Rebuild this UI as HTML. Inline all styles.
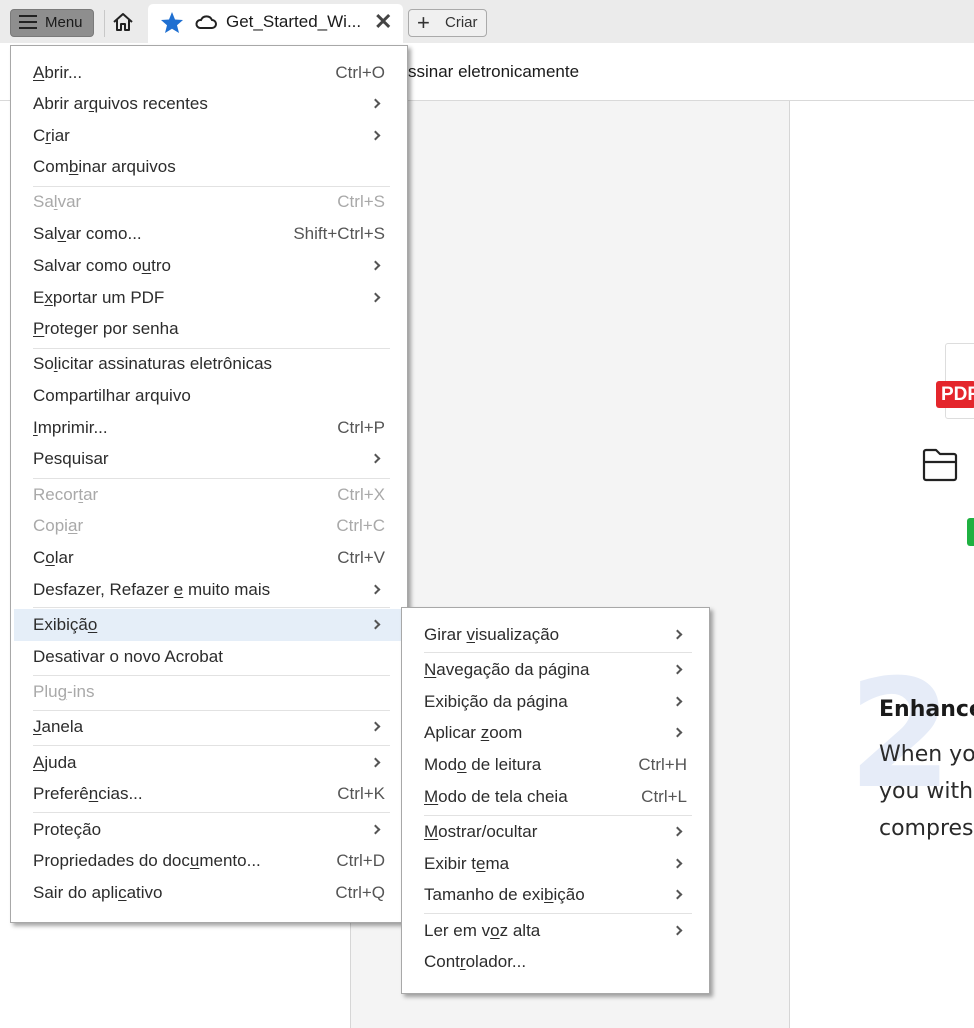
<!DOCTYPE html>
<html><head><meta charset="utf-8">
<style>
*{margin:0;padding:0;box-sizing:border-box}
body{width:974px;height:1028px;overflow:hidden;position:relative;background:#fff;font-family:"Liberation Sans",Arial,sans-serif;font-size:17px;color:#2c2c2c}
.abs{position:absolute}
.menu{position:absolute;background:#fff;border:1px solid #a8a8a8;box-shadow:3px 3px 4px rgba(0,0,0,.35)}
.r{position:absolute;left:0;right:0;height:22px;line-height:22px}
.r .t{position:absolute;left:22px}
.r .k{position:absolute;right:22px;color:#555}
.r .a{position:absolute;right:28px;width:7px;height:7px;border-right:2px solid #555;border-top:2px solid #555;transform:rotate(45deg);top:7px}
.d{color:#a9a9a9}.d .k{color:#a9a9a9}
.sep{position:absolute;left:22px;right:17px;height:1px;background:#e2e2e2}
u{text-decoration:underline;text-underline-offset:2px}
</style></head><body>
<div class="abs" style="left:0;top:0;width:974px;height:43px;background:#ebebeb"></div>
<div class="abs" style="left:10px;top:9px;width:84px;height:28px;background:#8e8e8e;border-radius:4px;border:1px solid #7a7a7a"></div>
<div class="abs" style="left:19px;top:15px;width:18px;height:2px;background:#222;box-shadow:0 6px 0 #222,0 12px 0 #222"></div>
<div class="abs" style="left:45px;top:14px;font-size:15px;color:#1a1a1a">Menu</div>
<div class="abs" style="left:104px;top:10px;width:1px;height:27px;background:#c8c8c8"></div>
<svg class="abs" style="left:112px;top:12px" width="22" height="20" viewBox="0 0 22 20"><path d="M2 10 L11 2 L20 10 M5 8 V18 H9 V12 H13 V18 H17 V8" fill="none" stroke="#222" stroke-width="2" stroke-linejoin="round"/></svg>
<div class="abs" style="left:148px;top:4px;width:255px;height:39px;background:#fff;border-radius:5px 5px 0 0"></div>
<svg class="abs" style="left:160px;top:11px" width="24" height="23" viewBox="0 0 24 23"><path d="M12 1 L15 8.5 L23 9 L17 14.2 L19 22 L12 17.8 L5 22 L7 14.2 L1 9 L9 8.5 Z" fill="#1f6fd1"/></svg>
<svg class="abs" style="left:195px;top:14px" width="22" height="16" viewBox="0 0 22 16"><path d="M5 14 H17 A4 4 0 0 0 17 6 A6 6 0 0 0 6 6 A4 4 0 0 0 5 14 Z" fill="none" stroke="#222" stroke-width="2"/></svg>
<div class="abs" style="left:226px;top:12px;font-size:17px;color:#1a1a1a">Get_Started_Wi...</div>
<div class="abs" style="left:374px;top:9px;font-size:22px;color:#444;font-weight:bold">✕</div>
<div class="abs" style="left:408px;top:9px;width:79px;height:28px;border:1px solid #aaa;border-radius:4px;background:#f0f0f0"></div>
<div class="abs" style="left:417px;top:10px;font-size:22px;color:#333">+</div>
<div class="abs" style="left:445px;top:14px;font-size:15px;color:#333">Criar</div>
<div class="abs" style="left:408px;top:62px;font-size:17px;color:#1a1a1a">ssinar eletronicamente</div>
<div class="abs" style="left:0;top:100px;width:974px;height:1px;background:#d9d9d9"></div>
<div class="abs" style="left:350px;top:101px;width:440px;height:927px;background:#f4f4f4;border-left:1px solid #d6d6d6;border-right:1px solid #d6d6d6"></div>
<div class="abs" style="left:945px;top:343px;width:40px;height:76px;border:1px solid #ddd;border-radius:3px;background:#fff"></div>
<div class="abs" style="left:936px;top:381px;width:40px;height:27px;background:#e4262c;border-radius:3px;color:#fff;font-weight:bold;font-size:19px;line-height:27px;padding-left:5px">PDF</div>
<svg class="abs" style="left:921px;top:448px" width="38" height="34" viewBox="0 0 38 34"><path d="M3 4 A2 2 0 0 1 5 2 H15 L19 6 H33 A2 2 0 0 1 35 8 V30 A2 2 0 0 1 33 32 H5 A2 2 0 0 1 3 30 Z M3 14 H35" fill="none" stroke="#222" stroke-width="2.2" stroke-linejoin="round"/></svg>
<div class="abs" style="left:967px;top:518px;width:10px;height:28px;background:#1fb141;border-radius:3px"></div>
<div class="abs" style="left:848px;top:660px;font-size:150px;font-weight:bold;color:#e6ecf8;line-height:1;font-family:'DejaVu Sans',sans-serif">2</div>
<div class="abs" style="left:879px;top:697px;font-size:22px;font-weight:bold;color:#1a1a1a;font-family:'DejaVu Sans',sans-serif;white-space:nowrap">Enhance</div>
<div class="abs" style="left:879px;top:736px;font-size:22px;color:#2a2a2a;line-height:37px;font-family:'DejaVu Sans',sans-serif;white-space:nowrap">When you<br>you with<br>compres</div>

<div class="menu" style="left:10px;top:45px;width:398px;height:878px">
<div class="r" style="top:16px"><span class="t"><u>A</u>brir...</span><span class="k">Ctrl+O</span></div>
<div class="r" style="top:47px"><span class="t">Abrir ar<u>q</u>uivos recentes</span><span class="a"></span></div>
<div class="r" style="top:79px"><span class="t">C<u>r</u>iar</span><span class="a"></span></div>
<div class="r" style="top:110px"><span class="t">Com<u>b</u>inar arquivos</span></div>
<div class="sep" style="top:140px"></div>
<div class="r d" style="top:145px"><span class="t">Sa<u>l</u>var</span><span class="k">Ctrl+S</span></div>
<div class="r" style="top:177px"><span class="t">Sal<u>v</u>ar como...</span><span class="k">Shift+Ctrl+S</span></div>
<div class="r" style="top:209px"><span class="t">Salvar como o<u>u</u>tro</span><span class="a"></span></div>
<div class="r" style="top:241px"><span class="t">E<u>x</u>portar um PDF</span><span class="a"></span></div>
<div class="r" style="top:272px"><span class="t"><u>P</u>roteger por senha</span></div>
<div class="sep" style="top:302px"></div>
<div class="r" style="top:307px"><span class="t">So<u>l</u>icitar assinaturas eletrônicas</span></div>
<div class="r" style="top:339px"><span class="t">Compartilhar arquivo</span></div>
<div class="r" style="top:371px"><span class="t"><u>I</u>mprimir...</span><span class="k">Ctrl+P</span></div>
<div class="r" style="top:402px"><span class="t">Pesquisar</span><span class="a"></span></div>
<div class="sep" style="top:432px"></div>
<div class="r d" style="top:438px"><span class="t">Recor<u>t</u>ar</span><span class="k">Ctrl+X</span></div>
<div class="r d" style="top:469px"><span class="t">Copi<u>a</u>r</span><span class="k">Ctrl+C</span></div>
<div class="r" style="top:501px"><span class="t">C<u>o</u>lar</span><span class="k">Ctrl+V</span></div>
<div class="r" style="top:533px"><span class="t">Desfazer, Refazer <u>e</u> muito mais</span><span class="a"></span></div>
<div class="sep" style="top:561px"></div>
<div class="abs" style="left:3px;right:0;top:563px;height:32px;background:#e5eef8"></div>
<div class="r" style="top:568px"><span class="t">Exibiçã<u>o</u></span><span class="a"></span></div>
<div class="r" style="top:600px"><span class="t">Desativar o novo Acrobat</span></div>
<div class="sep" style="top:629px"></div>
<div class="r d" style="top:635px"><span class="t">Plu<u>g</u>-ins</span></div>
<div class="sep" style="top:664px"></div>
<div class="r" style="top:670px"><span class="t"><u>J</u>anela</span><span class="a"></span></div>
<div class="sep" style="top:699px"></div>
<div class="r" style="top:706px"><span class="t"><u>A</u>juda</span><span class="a"></span></div>
<div class="r" style="top:737px"><span class="t">Preferê<u>n</u>cias...</span><span class="k">Ctrl+K</span></div>
<div class="sep" style="top:766px"></div>
<div class="r" style="top:773px"><span class="t">Proteção</span><span class="a"></span></div>
<div class="r" style="top:804px"><span class="t">Propriedades do doc<u>u</u>mento...</span><span class="k">Ctrl+D</span></div>
<div class="r" style="top:836px"><span class="t">Sair do apli<u>c</u>ativo</span><span class="k">Ctrl+Q</span></div>
</div>

<div class="menu" style="left:401px;top:607px;width:309px;height:387px">
<div class="r" style="top:16px"><span class="t">Girar <u>v</u>isualização</span><span class="a"></span></div>
<div class="sep" style="top:44px"></div>
<div class="r" style="top:51px"><span class="t"><u>N</u>avegação da página</span><span class="a"></span></div>
<div class="r" style="top:83px"><span class="t">Exibição da página</span><span class="a"></span></div>
<div class="r" style="top:114px"><span class="t">Aplicar <u>z</u>oom</span><span class="a"></span></div>
<div class="r" style="top:146px"><span class="t">Mod<u>o</u> de leitura</span><span class="k">Ctrl+H</span></div>
<div class="r" style="top:178px"><span class="t"><u>M</u>odo de tela cheia</span><span class="k">Ctrl+L</span></div>
<div class="sep" style="top:207px"></div>
<div class="r" style="top:213px"><span class="t"><u>M</u>ostrar/ocultar</span><span class="a"></span></div>
<div class="r" style="top:245px"><span class="t">Exibir t<u>e</u>ma</span><span class="a"></span></div>
<div class="r" style="top:276px"><span class="t">Tamanho de exi<u>b</u>ição</span><span class="a"></span></div>
<div class="sep" style="top:305px"></div>
<div class="r" style="top:312px"><span class="t">Ler em v<u>o</u>z alta</span><span class="a"></span></div>
<div class="r" style="top:343px"><span class="t">Cont<u>r</u>olador...</span></div>
</div>
</body></html>
